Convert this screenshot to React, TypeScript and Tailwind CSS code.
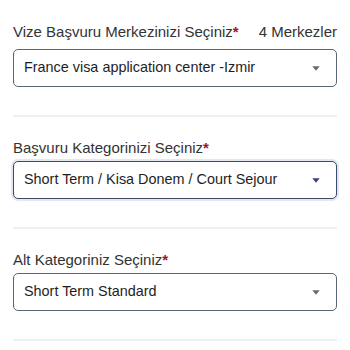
import React from 'react';

type FieldProps = {
  label: string;
  value: string;
  extra?: string;
  focused?: boolean;
  first?: boolean;
};

const Caret: React.FC<{ color: string }> = ({ color }) => (
  <svg width="8" height="5" viewBox="0 0 8 5" className="shrink-0">
    <path d="M0.3 0.3 L7.7 0.3 L4 4.7 Z" fill={color} />
  </svg>
);

const Field: React.FC<FieldProps> = ({ label, value, extra, focused, first }) => (
  <section className={'flex flex-col ' + (first ? 'pt-[22px]' : 'pt-[21px]')}>
    <div className="flex items-end justify-between h-[20px] whitespace-nowrap">
      <span className="text-[15px] leading-[20px] text-[#333333]">
        {label}
        <span className="font-bold text-[#a3122b]">*</span>
      </span>
      {extra && <span className="text-[15px] leading-[20px] text-[#333333]">{extra}</span>}
    </div>
    <div
      className={
        'h-[38px] rounded-[5px] border flex items-center justify-between pl-[10px] pr-[16px] bg-white ' +
        (first ? 'mt-[7px] ' : 'mt-[3px] ') +
        (focused
          ? 'border-[#3d4a6a] shadow-[0_0_0_2px_#e3e8f0]'
          : 'border-[#5c6578]')
      }
    >
      <span className="text-[14.4px] text-[#1e1e1e] whitespace-nowrap">{value}</span>
      <Caret color={focused ? '#3a3d8c' : '#6b6b6b'} />
    </div>
    <div className="mt-[28px] h-[2px] bg-[#efefef]" />
  </section>
);

export default function App() {
  return (
    <main
      className="w-[350px] h-[350px] bg-white px-[13px] overflow-hidden flex flex-col"
      style={{ fontFamily: '"Liberation Sans", Arial, sans-serif' }}
    >
      <Field
        label="Vize Başvuru Merkezinizi Seçiniz"
        value="France visa application center -Izmir"
        extra="4 Merkezler"
        first
      />
      <Field
        label="Başvuru Kategorinizi Seçiniz"
        value="Short Term / Kisa Donem / Court Sejour"
        focused
      />
      <Field label="Alt Kategoriniz Seçiniz" value="Short Term Standard" />
    </main>
  );
}
